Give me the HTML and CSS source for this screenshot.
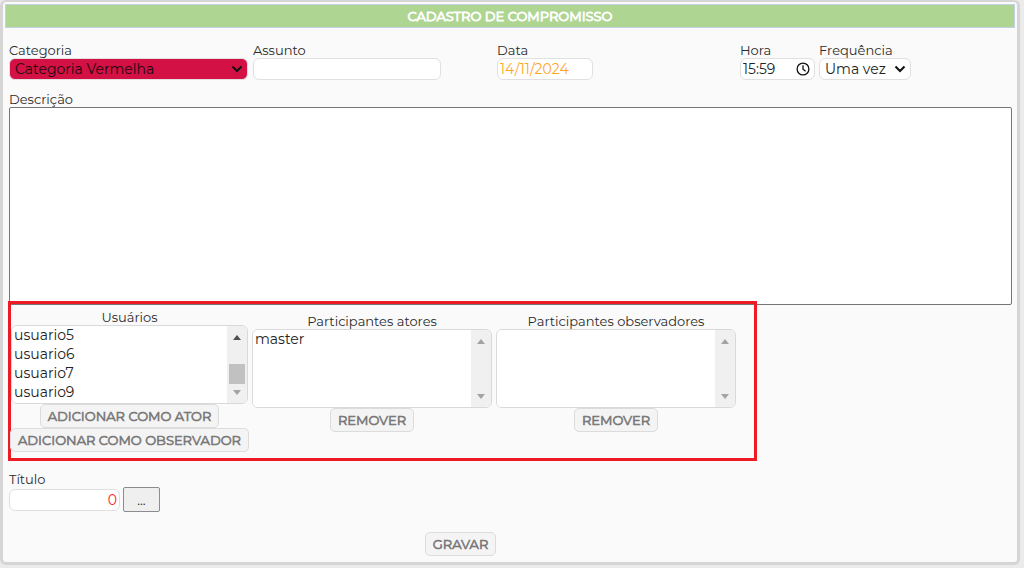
FILE: index.html
```
<!DOCTYPE html>
<html lang="pt-BR">
<head>
<meta charset="utf-8">
<title>Cadastro de Compromisso</title>
<link rel="stylesheet" href="styles.css">
</head>
<body>
<form class="panel">
  <h1 class="title">CADASTRO DE COMPROMISSO</h1>
  <div class="body">
    <div class="row">
      <div class="field">
        <label for="categoria">Categoria</label>
        <div class="drop drop-red">
          <select id="categoria" class="control"><option>Categoria Vermelha</option></select>
          <svg class="chevron" viewBox="0 0 12 8" aria-hidden="true"><path d="M1.500 1.500 6 6l4.500-4.500"/></svg>
        </div>
      </div>
      <div class="field">
        <label for="assunto">Assunto</label>
        <input id="assunto" class="control subject" type="text">
      </div>
      <div class="field">
        <label for="data">Data</label>
        <input id="data" class="control date" type="text" value="14/11/2024">
      </div>
      <div class="field">
        <label for="hora">Hora</label>
        <div class="time">
          <input id="hora" class="control" type="text" value="15:59">
          <svg class="clock" viewBox="0 0 14 14" aria-hidden="true"><circle cx="7" cy="7" r="5.900"/><path d="M7 3.200V7.200l2.600 2"/></svg>
        </div>
      </div>
      <div class="field">
        <label for="frequencia">Frequência</label>
        <div class="drop drop-frequency">
          <select id="frequencia" class="control"><option>Uma vez</option></select>
          <svg class="chevron" viewBox="0 0 12 8" aria-hidden="true"><path d="M1.500 1.500 6 6l4.500-4.500"/></svg>
        </div>
      </div>
    </div>

    <div class="field description">
      <label for="descricao">Descrição</label>
      <textarea id="descricao"></textarea>
    </div>

    <div class="people">
      <div class="group">
        <label for="usuarios">Usuários</label>
        <div class="list">
          <select id="usuarios" size="4" multiple>
            <option>usuario5</option>
            <option>usuario6</option>
            <option>usuario7</option>
            <option>usuario9</option>
          </select>
          <div class="bar bar-active" aria-hidden="true"><i class="up"></i><i class="thumb"></i><i class="down"></i></div>
        </div>
        <button type="button" class="btn">ADICIONAR COMO ATOR</button>
        <button type="button" class="btn">ADICIONAR COMO OBSERVADOR</button>
      </div>
      <div class="group group-low">
        <label for="atores">Participantes atores</label>
        <div class="list">
          <select id="atores" size="4" multiple><option>master</option></select>
          <div class="bar" aria-hidden="true"><i class="up"></i><i class="down"></i></div>
        </div>
        <button type="button" class="btn">REMOVER</button>
      </div>
      <div class="group group-low">
        <label for="observadores">Participantes observadores</label>
        <div class="list">
          <select id="observadores" size="4" multiple></select>
          <div class="bar" aria-hidden="true"><i class="up"></i><i class="down"></i></div>
        </div>
        <button type="button" class="btn">REMOVER</button>
      </div>
    </div>

    <div class="field">
      <label for="titulo">Título</label>
      <div class="lookup">
        <input id="titulo" class="control number" type="text" value="0">
        <button type="button" class="more">...</button>
      </div>
    </div>

    <div class="actions"><button type="submit" class="btn">GRAVAR</button></div>
  </div>
</form>
</body>
</html>
```
FILE: styles.css
```
* { box-sizing: border-box; }
body {
  margin: 0;
  background: #ebebeb;
  color: #2b2b2b;
  font: 13px/16px Montserrat, Inter, sans-serif;
}
.panel {
  margin: 0 4px 4px 0;
  padding: 2px;
  border: 3px solid #d5d5d5;
  border-top-width: 2px;
  border-radius: 6px;
  background: #fafafa;
}
.title {
  margin: 0;
  border: 1px solid #c5d2e4;
  background: #afd592;
  color: #fff;
  font-size: 13px;
  font-weight: 400;
  line-height: 22px;
  text-align: center;
  -webkit-text-stroke: 0.8px #fff;
}
.body { padding: 14px 3px 4px 4px; }
.row {
  display: grid;
  grid-template-columns: 240px 240px 239px 75px 1fr;
  gap: 4px;
}
.field { display: flex; flex-direction: column; align-items: flex-start; }
.control {
  height: 22px;
  padding: 0 2px;
  border: 1px solid #e0e0e0;
  border-radius: 6px;
  background: #fff;
  color: #222;
  font: 14px/18px Montserrat, Inter, sans-serif;
}
.subject { width: 188px; }
.date { width: 96px; color: #ffa51f; }
.time, .drop { position: relative; display: flex; }
.time .control, .drop .control { width: 100%; appearance: none; }
.drop .control { padding: 0 5px; }
.drop-red { width: 239px; }
.drop-red .control { background: #d31145; color: #24060e; }
.drop-frequency { width: 92px; }
.chevron, .clock { position: absolute; pointer-events: none; fill: none; stroke: #111; }
.chevron { right: 5px; top: 7px; width: 12px; height: 8px; stroke-width: 2; }
.time { width: 75px; }
.clock { right: 5px; top: 4px; width: 14px; height: 14px; stroke-width: 1.3; }
.description { margin-top: 11px; }
textarea {
  display: block;
  width: 100%;
  height: 198px;
  border: 1px solid #767676;
  border-radius: 2px;
  background: #fff;
  resize: none;
}
.people {
  position: relative;
  display: grid;
  grid-template-columns: 237px 240px 240px;
  gap: 4px;
  width: fit-content;
  margin: -4px 0 10px -1px;
  padding: 5px 18px 6px 0;
  border: 3px solid #ed1c24;
}
.group { display: flex; flex-direction: column; align-items: center; }
.group-low { padding-top: 4px; }
.list {
  display: flex;
  width: 100%;
  height: 79px;
  overflow: hidden;
  border: 1px solid #d9d9d9;
  border-radius: 6px;
  background: #fff;
}
.list select {
  flex: 1;
  min-width: 0;
  height: 77px;
  padding: 0;
  overflow: hidden;
  border: 0;
  outline: 0;
  background: #fff;
  color: #222;
  font: 14px/19px Montserrat, Inter, sans-serif;
}
.list option { height: 19px; min-height: 0; padding: 0 2px; line-height: 19px; color: #222; }
.bar {
  display: flex;
  flex-direction: column;
  align-items: center;
  width: 20px;
  padding: 9px 0 8px;
  background: #f0f0f0;
}
.up, .down { border: 4px solid transparent; }
.up { border-top: 0; border-bottom: 5px solid #a3a3a3; }
.down { margin-top: auto; border-bottom: 0; border-top: 5px solid #a3a3a3; }
.bar-active .up { border-bottom-color: #505050; }
.thumb { width: 16px; height: 20px; margin-top: 24px; background: #c1c1c1; }
.btn {
  height: 24px;
  padding: 0 7px;
  border: 1px solid #dcdcdc;
  border-radius: 5px;
  background: #f4f4f4;
  color: #777;
  font: 400 13px/20px Montserrat, Inter, sans-serif;
  white-space: nowrap;
  -webkit-text-stroke: 0.6px #777;
}
.lookup { display: flex; align-items: center; gap: 3px; }
.number { width: 111px; color: #f22; text-align: right; }
.more {
  width: 37px;
  height: 25px;
  padding: 0;
  border: 1px solid #8c8c8c;
  border-radius: 2px;
  background: #efefef;
  color: #222;
  font: 13px/16px Montserrat, Inter, sans-serif;
}
.actions { display: flex; justify-content: center; padding: 20px 100px 0 0; }
```
